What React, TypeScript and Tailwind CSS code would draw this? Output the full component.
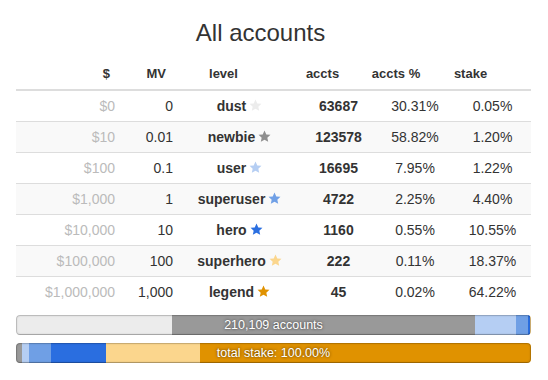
import React from "react";

type Row = {
  usd: string;
  mv: string;
  level: string;
  star: string;
  accts: string;
  pct: number;
  stake: number;
};

const rows: Row[] = [
  { usd: "$0", mv: "0", level: "dust", star: "#ececec", accts: "63687", pct: 30.31, stake: 0.05 },
  { usd: "$10", mv: "0.01", level: "newbie", star: "#8f8f8f", accts: "123578", pct: 58.82, stake: 1.2 },
  { usd: "$100", mv: "0.1", level: "user", star: "#b5cef3", accts: "16695", pct: 7.95, stake: 1.22 },
  { usd: "$1,000", mv: "1", level: "superuser", star: "#70a0e6", accts: "4722", pct: 2.25, stake: 4.4 },
  { usd: "$10,000", mv: "10", level: "hero", star: "#2b6fe0", accts: "1160", pct: 0.55, stake: 10.55 },
  { usd: "$100,000", mv: "100", level: "superhero", star: "#fbd68d", accts: "222", pct: 0.11, stake: 18.37 },
  { usd: "$1,000,000", mv: "1,000", level: "legend", star: "#e09200", accts: "45", pct: 0.02, stake: 64.22 },
];

const segColors = ["#ececec", "#999999", "#b5cef3", "#6f9fe5", "#2a6ee0", "#fbd68d", "#e09200"];

function Star({ color }: { color: string }) {
  return (
    <svg width="13" height="13" viewBox="0 0 24 24" className="shrink-0 -mt-[1px]">
      <path
        d="M12 1l3.3 7.1 7.7.8-5.8 5.2 1.6 7.6L12 17.8l-6.8 3.9 1.6-7.6L1 8.9l7.7-.8z"
        fill={color}
      />
    </svg>
  );
}

function Bar({ values, label }: { values: number[]; label: string }) {
  return (
    <div className="relative h-[20px] w-full overflow-hidden rounded-[4px] bg-[#f5f5f5] flex">
      {values.map((v, i) => (
        <div
          key={i}
          className="h-full shrink-0 shadow-[inset_0_-1px_0_rgba(0,0,0,0.12)]"
          style={{ width: `${v}%`, backgroundColor: segColors[i] }}
        />
      ))}
      <div className="absolute inset-0 rounded-[4px] shadow-[inset_0_0_0_1px_rgba(0,0,0,0.12),inset_0_0_2px_1px_rgba(0,0,0,0.12)]" />
      <div className="absolute inset-0 flex items-center justify-center text-white text-[12.5px] leading-[20px] [text-shadow:0_0_3px_rgba(0,0,0,0.7)]">
        {label}
      </div>
    </div>
  );
}

export default function App() {
  return (
    <div className="w-[548px] h-[380px] bg-white text-[#333] font-['Liberation_Sans',Arial,sans-serif] overflow-hidden">
      <h3 className="mt-[20px] pr-[27px] text-center text-[24px] leading-[26px] font-normal">All accounts</h3>
      <div className="ml-[16px] w-[515px] mt-[13px]">
        <div className="grid grid-cols-[94px_56px_115px_83px_64px_85px_18px] h-[30px] items-center text-[13px] font-bold border-b-2 border-[#ddd] box-content">
          <div className="text-right">$</div>
          <div className="text-right">MV</div>
          <div className="text-center">level</div>
          <div className="text-center">accts</div>
          <div className="text-center">accts %</div>
          <div className="text-center">stake</div>
          <div />
        </div>
        {rows.map((r, i) => (
          <div
            key={r.level}
            className={`grid grid-cols-[104px_58px_123px_75px_78px_77px] h-[30px] items-center text-[14px] leading-[20px] ${
              i > 0 ? "border-t border-[#ddd] box-content" : ""
            } ${i % 2 === 1 ? "bg-[#f9f9f9]" : "bg-white"}`}
          >
            <div className="text-right pr-[5px] text-[#bbbbbb]">{r.usd}</div>
            <div className="text-right pr-[5px]">{r.mv}</div>
            <div className="flex items-center justify-center gap-[3px] font-bold">
              <span>{r.level}</span>
              <Star color={r.star} />
            </div>
            <div className="text-center font-bold">{r.accts}</div>
            <div className="text-center">{r.pct.toFixed(2)}%</div>
            <div className="text-center">{r.stake.toFixed(2)}%</div>
          </div>
        ))}
        <div className="mt-[8px] flex flex-col gap-[8px]">
          <Bar values={rows.map((r) => r.pct)} label="210,109 accounts" />
          <Bar values={rows.map((r) => r.stake)} label="total stake: 100.00%" />
        </div>
      </div>
    </div>
  );
}
